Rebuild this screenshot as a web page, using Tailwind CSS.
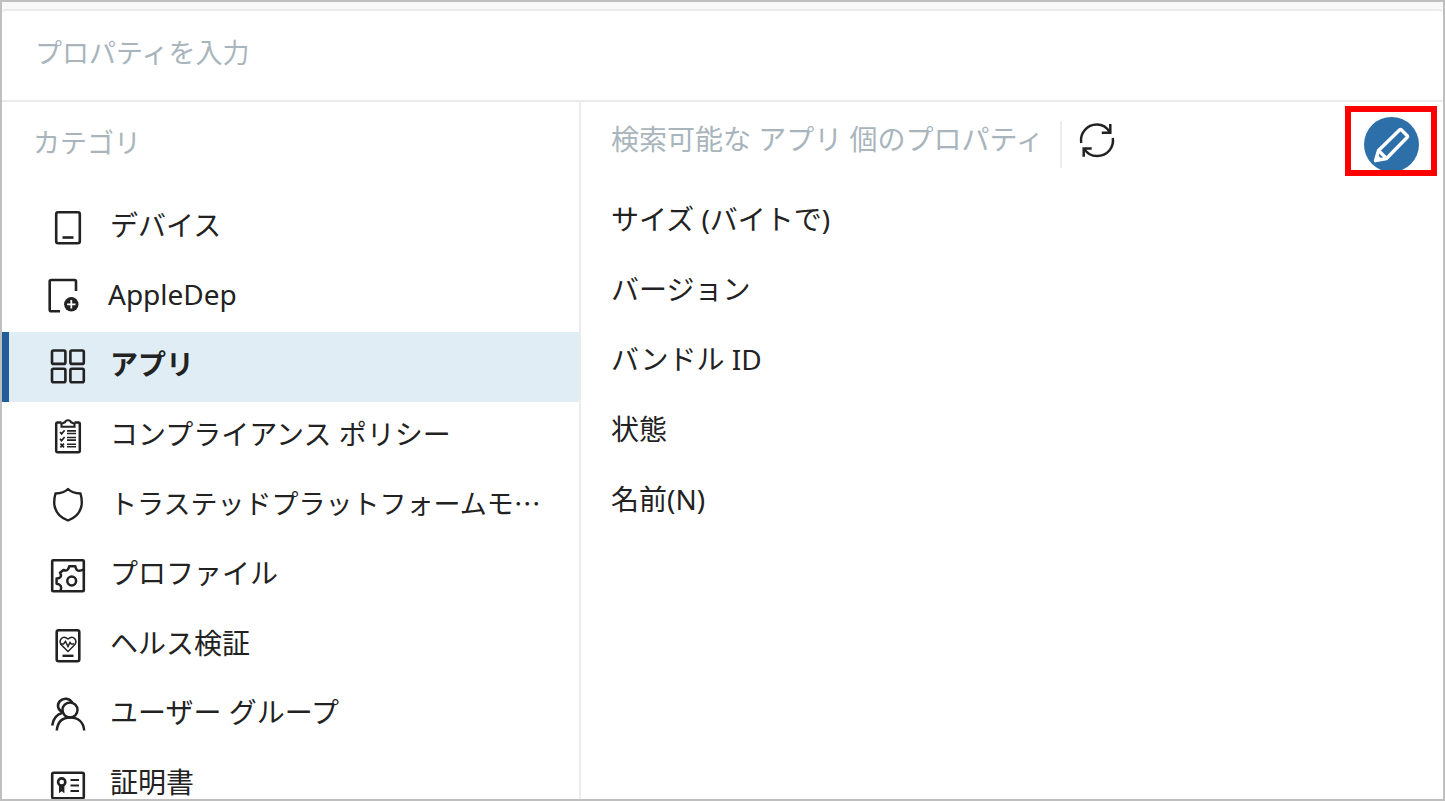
<!DOCTYPE html>
<html lang="ja">
<head>
  <meta charset="UTF-8" />
  <meta name="viewport" content="width=device-width, initial-scale=1" />
  <title>プロパティの選択</title>
  <!-- Tailwind -->
  <script src="https://cdn.jsdelivr.net/npm/@tailwindcss/browser@4"></script>
</head>
<body class="bg-white">
<div class="flex h-screen flex-col overflow-hidden border-2 border-[#bfbfbf] bg-[#f8f8f8] pt-[7px] font-['Noto_Sans','Noto_Sans_CJK_JP',sans-serif] text-[28px] leading-[40px] text-[#222222]">
  <main class="flex min-h-0 flex-1 flex-col rounded-t-sm border-t-2 border-[#ebebeb] bg-white">

    <!-- SEARCH -->
    <div class="shrink-0 border-b-2 border-[#ebebeb]">
      <input type="text" aria-label="プロパティを入力" placeholder="プロパティを入力" class="block h-[89px] w-full px-[33px] pb-[6px] text-[27px] placeholder:text-[#a9b5bc] focus:outline-none" />
    </div>

    <div class="flex min-h-0 flex-1">
      <!-- CATEGORIES -->
      <nav class="w-[579px] shrink-0 overflow-hidden border-r-2 border-[#ebebeb]" aria-labelledby="catTitle">
        <h2 id="catTitle" class="h-[91px] pt-[21px] pl-[31px] text-[27px] text-[#a9b5bc]">カテゴリ</h2>
        <ul class="grid h-[627px] grid-cols-1 grid-rows-9">
          <li>
            <button type="button" class="flex h-full w-full items-center gap-[22px] border-l-[7px] border-transparent pl-[39px] text-left">
              <svg class="size-10 shrink-0" viewBox="0 0 40 40" fill="none" stroke="currentColor" stroke-width="2.6">
                <rect x="8.2" y="4.2" width="23.6" height="31" rx="2" />
                <path d="M14.5 29.5h11" />
              </svg>
              <span class="pb-[6px] whitespace-nowrap">デバイス</span>
            </button>
          </li>
          <li>
            <button type="button" class="flex h-full w-full items-center gap-5 border-l-[7px] border-transparent pl-[39px] text-left">
              <svg class="size-10 shrink-0" viewBox="0 0 40 40" fill="none" stroke="currentColor" stroke-width="2.6">
                <path d="M28 14V4.500q0-1.500-1.500-1.500H3.200q-1.500 0-1.500 1.500v28.300q0 1.500 1.500 1.500H12" />
                <circle cx="23.300" cy="27.300" r="7.200" fill="currentColor" stroke="none" />
                <path d="M23.300 23.100v8.400M19.100 27.300h8.400" stroke="#ffffff" stroke-width="1.800" />
              </svg>
              <span class="pb-[6px] whitespace-nowrap">AppleDep</span>
            </button>
          </li>
          <li>
            <button type="button" aria-current="true" class="flex h-full w-full items-center gap-[22px] border-l-[7px] border-[#225e98] bg-[#e0edf5] pl-[39px] text-left font-bold">
              <svg class="size-10 shrink-0" viewBox="0 0 40 40" fill="none" stroke="currentColor" stroke-width="2.6">
                <rect x="4" y="3.500" width="13.400" height="13.400" rx="1.500" />
                <rect x="22.400" y="3.500" width="13.400" height="13.400" rx="1.500" />
                <rect x="4" y="21.800" width="13.400" height="13.400" rx="1.500" />
                <rect x="22.400" y="21.800" width="13.400" height="13.400" rx="1.500" />
              </svg>
              <span class="pb-[6px] whitespace-nowrap">アプリ</span>
            </button>
          </li>
          <li>
            <button type="button" class="flex h-full w-full items-center gap-[22px] border-l-[7px] border-transparent pl-[39px] text-left">
              <svg class="size-10 shrink-0" viewBox="0 0 40 40" fill="none" stroke="currentColor" stroke-width="2.5">
                <path d="M13.500 5.500H9.700q-1.500 0-1.500 1.500v26.700q0 1.500 1.500 1.500h20.600q1.500 0 1.500-1.500V7q0-1.500-1.500-1.500h-3.800" />
                <path d="M13.500 9.700v-3l3.500-1.500q.6-2 3-2t3 2l3.500 1.500v3z" stroke-width="2.100" />
                <path d="M19 13.900h9M19 16.500h9M19 20.500h9M19 23.100h9M19 27.200h9M19 29.800h9" stroke-width="1.600" />
                <path d="M12 15.200l1.600 1.700 3-3.600M12 21.900l1.600 1.700 3-3.600M12.400 26.700l3.600 3.600m0-3.600l-3.600 3.600" stroke-width="1.700" />
              </svg>
              <span class="pb-[6px] whitespace-nowrap">コンプライアンス ポリシー</span>
            </button>
          </li>
          <li>
            <button type="button" class="flex h-full w-full items-center gap-[22px] border-l-[7px] border-transparent pl-[39px] text-left">
              <svg class="size-10 shrink-0" viewBox="0 0 40 40" fill="none" stroke="currentColor" stroke-width="2.4" stroke-linejoin="round">
                <path d="M20 3C17 6 12.500 7.300 7.500 7.500C6.200 12 6 15.500 6.400 19C7.500 26.500 12 31.500 20 34.500C28 31.500 32.500 26.500 33.600 19C34 15.500 33.800 12 32.500 7.500C27.500 7.300 23 6 20 3Z" />
              </svg>
              <span class="pb-[6px] text-[27px] whitespace-nowrap">トラステッドプラットフォームモ<span class="font-['Noto_Sans_CJK_JP',sans-serif]">…</span></span>
            </button>
          </li>
          <li>
            <button type="button" class="flex h-full w-full items-center gap-[22px] border-l-[7px] border-transparent pl-[39px] text-left">
              <svg class="size-10 shrink-0" viewBox="0 0 40 40" fill="none" stroke="currentColor" stroke-width="2.500" stroke-linejoin="round">
                <rect x="4.200" y="4.200" width="31.600" height="31" rx="1" stroke-width="2.600" />
                <circle cx="23.700" cy="25" r="4.400" />
                <path d="M35.500 13.500Q31 15.800 28.800 13.800Q27.800 12.800 27.300 10.300H21.200Q20.800 13 19.300 14Q17.800 14.900 15.500 14L12 16.800Q13.700 19 12.500 20.900Q11.500 22.300 8.600 22.600V27.800Q11.800 28.200 12.800 30Q13.700 31.800 12.500 35" />
              </svg>
              <span class="pb-[6px] whitespace-nowrap">プロファイル</span>
            </button>
          </li>
          <li>
            <button type="button" class="flex h-full w-full items-center gap-[22px] border-l-[7px] border-transparent pl-[39px] text-left">
              <svg class="size-10 shrink-0" viewBox="0 0 40 40" fill="none" stroke="currentColor" stroke-width="1.500">
                <rect x="8.700" y="4.200" width="22.600" height="31" rx="2" stroke-width="2.600" />
                <path d="M20 25.500L14 19.500C9.500 14.500 14.500 8.500 20 13C25.500 8.500 30.500 14.500 26 19.500Z" />
                <path d="M12 18h3.500l2-2.500 2.500 5 2-4 1.200 1.500H26" />
                <path d="M14.500 29.800h11" stroke-width="2.400" />
              </svg>
              <span class="pb-[6px] whitespace-nowrap">ヘルス検証</span>
            </button>
          </li>
          <li>
            <button type="button" class="flex h-full w-full items-center gap-[22px] border-l-[7px] border-transparent pl-[39px] text-left">
              <svg class="size-10 shrink-0" viewBox="0 0 40 40" fill="none" stroke="currentColor" stroke-width="2.500">
                <circle cx="22" cy="15" r="7.500" />
                <path d="M15 17.500C9.500 15 8.500 9.500 12 6C15.500 2.500 21.500 3 24.200 7.500" />
                <path d="M8.800 35.500C9.500 27 14.500 22.500 22.300 22.500S35.500 27 36.200 35.500M4.200 30.500C5 24.500 8.500 19.500 14.500 17.800" />
              </svg>
              <span class="pb-[6px] whitespace-nowrap">ユーザー グループ</span>
            </button>
          </li>
          <li>
            <button type="button" class="flex h-full w-full items-center gap-[22px] border-l-[7px] border-transparent pl-[39px] text-left">
              <svg class="size-10 shrink-0" viewBox="0 0 40 40" fill="none" stroke="currentColor" stroke-width="2.600">
                <rect x="4.200" y="7.800" width="31.600" height="25.400" rx="1.500" />
                <circle cx="13.700" cy="17" r="3.600" />
                <path d="M11 20.300h5.400v8l-2.700-2-2.700 2z" fill="currentColor" stroke="none" />
                <path d="M22.500 15H31M22.500 20.500H31M22.500 26H31" stroke-width="2.200" />
              </svg>
              <span class="pb-[6px] whitespace-nowrap">証明書</span>
            </button>
          </li>
        </ul>
      </nav>

      <!-- PROPERTIES -->
      <section class="min-w-0 flex-1" aria-labelledby="propTitle">
        <div class="flex h-[84px] items-start pt-1 pr-[6px]">
          <h2 id="propTitle" class="pt-[13px] pl-[30px] whitespace-nowrap text-[#a9b5bc]">検索可能な アプリ 個のプロパティ</h2>
          <div class="mt-[15px] ml-4 h-[47px] w-[2px] bg-[#ebebeb]"></div>
          <button type="button" aria-label="更新" class="mt-[14px] ml-[15px]">
            <svg class="size-10" viewBox="0 0 40 40" fill="none" stroke="currentColor" stroke-width="2.500">
              <path d="M4.200 23C2.800 13.500 9.500 4.500 20 4.500C25.500 4.500 30 7.500 32.300 12M35.800 18C37.200 27.500 30.500 36 20 36C14.500 36 10 33.500 7.600 29" />
              <path d="M33.300 4v8.700h-8.500M6.700 36.700V28.500h8" />
            </svg>
          </button>
          <!-- highlighted edit button -->
          <div class="ml-auto flex h-[70px] w-[92px] justify-center overflow-hidden border-[6px] border-[#ff0000] pt-[5px]">
            <button type="button" aria-label="編集" class="size-[55px] shrink-0 rounded-full bg-[#2d6fa8] text-white">
              <svg class="size-full" viewBox="0 0 55 55" fill="none" stroke="currentColor" stroke-width="3.400" stroke-linejoin="round">
                <path d="M11.500 43.700L14.500 33.500L35.500 13Q36.500 12 37.500 13L43 18.500Q44 19.500 43 20.500L22.500 41.500Z" />
                <path d="M14.500 33.500L22.500 41.500" />
                <path d="M11.500 43.700l1.800-5.800 4 4z" fill="currentColor" stroke-width="1" />
              </svg>
            </button>
          </div>
        </div>
        <ul>
          <li><button type="button" class="h-[70px] w-full pb-1 pl-[30px] text-left">サイズ (バイトで)</button></li>
          <li><button type="button" class="h-[70px] w-full pb-1 pl-[30px] text-left">バージョン</button></li>
          <li><button type="button" class="h-[70px] w-full pb-1 pl-[30px] text-left">バンドル ID</button></li>
          <li><button type="button" class="h-[70px] w-full pb-1 pl-[30px] text-left">状態</button></li>
          <li><button type="button" class="h-[70px] w-full pb-1 pl-[30px] text-left">名前(N)</button></li>
        </ul>
      </section>
    </div>
  </main>
</div>
</body>
</html>
